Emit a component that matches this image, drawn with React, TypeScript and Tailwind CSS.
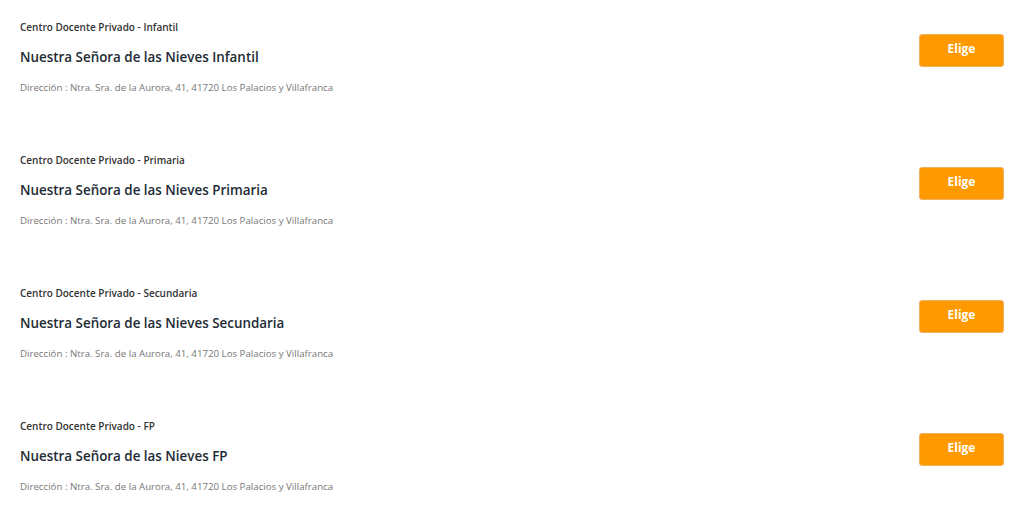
import React from 'react';

const centros = [
  { tipo: 'Infantil', nombre: 'Nuestra Señora de las Nieves Infantil' },
  { tipo: 'Primaria', nombre: 'Nuestra Señora de las Nieves Primaria' },
  { tipo: 'Secundaria', nombre: 'Nuestra Señora de las Nieves Secundaria' },
  { tipo: 'FP', nombre: 'Nuestra Señora de las Nieves FP' },
];

export default function App() {
  return (
    <div className="min-h-screen bg-white px-5 font-['Open_Sans',sans-serif]">
      {centros.map((c) => (
        <div key={c.tipo} className="flex h-[133px] items-start justify-between pt-5">
          <div className="flex flex-col">
            <p className="text-[10px] leading-[14px] font-semibold text-[#333]">
              Centro Docente Privado - {c.tipo}
            </p>
            <h2 className="mt-[13px] text-[13.4px] leading-[20px] font-semibold text-[#222b35]">
              {c.nombre}
            </h2>
            <p className="mt-[14px] text-[9.7px] leading-[14px] text-[#777]">
              Dirección : Ntra. Sra. de la Aurora, 41, 41720 Los Palacios y Villafranca
            </p>
          </div>
          <button className="mt-[14px] h-[33px] w-[85px] rounded-[3px] border border-[#f0b060] bg-[#ff9900] pb-[3px] text-[12px] font-bold text-white">
            Elige
          </button>
        </div>
      ))}
    </div>
  );
}
